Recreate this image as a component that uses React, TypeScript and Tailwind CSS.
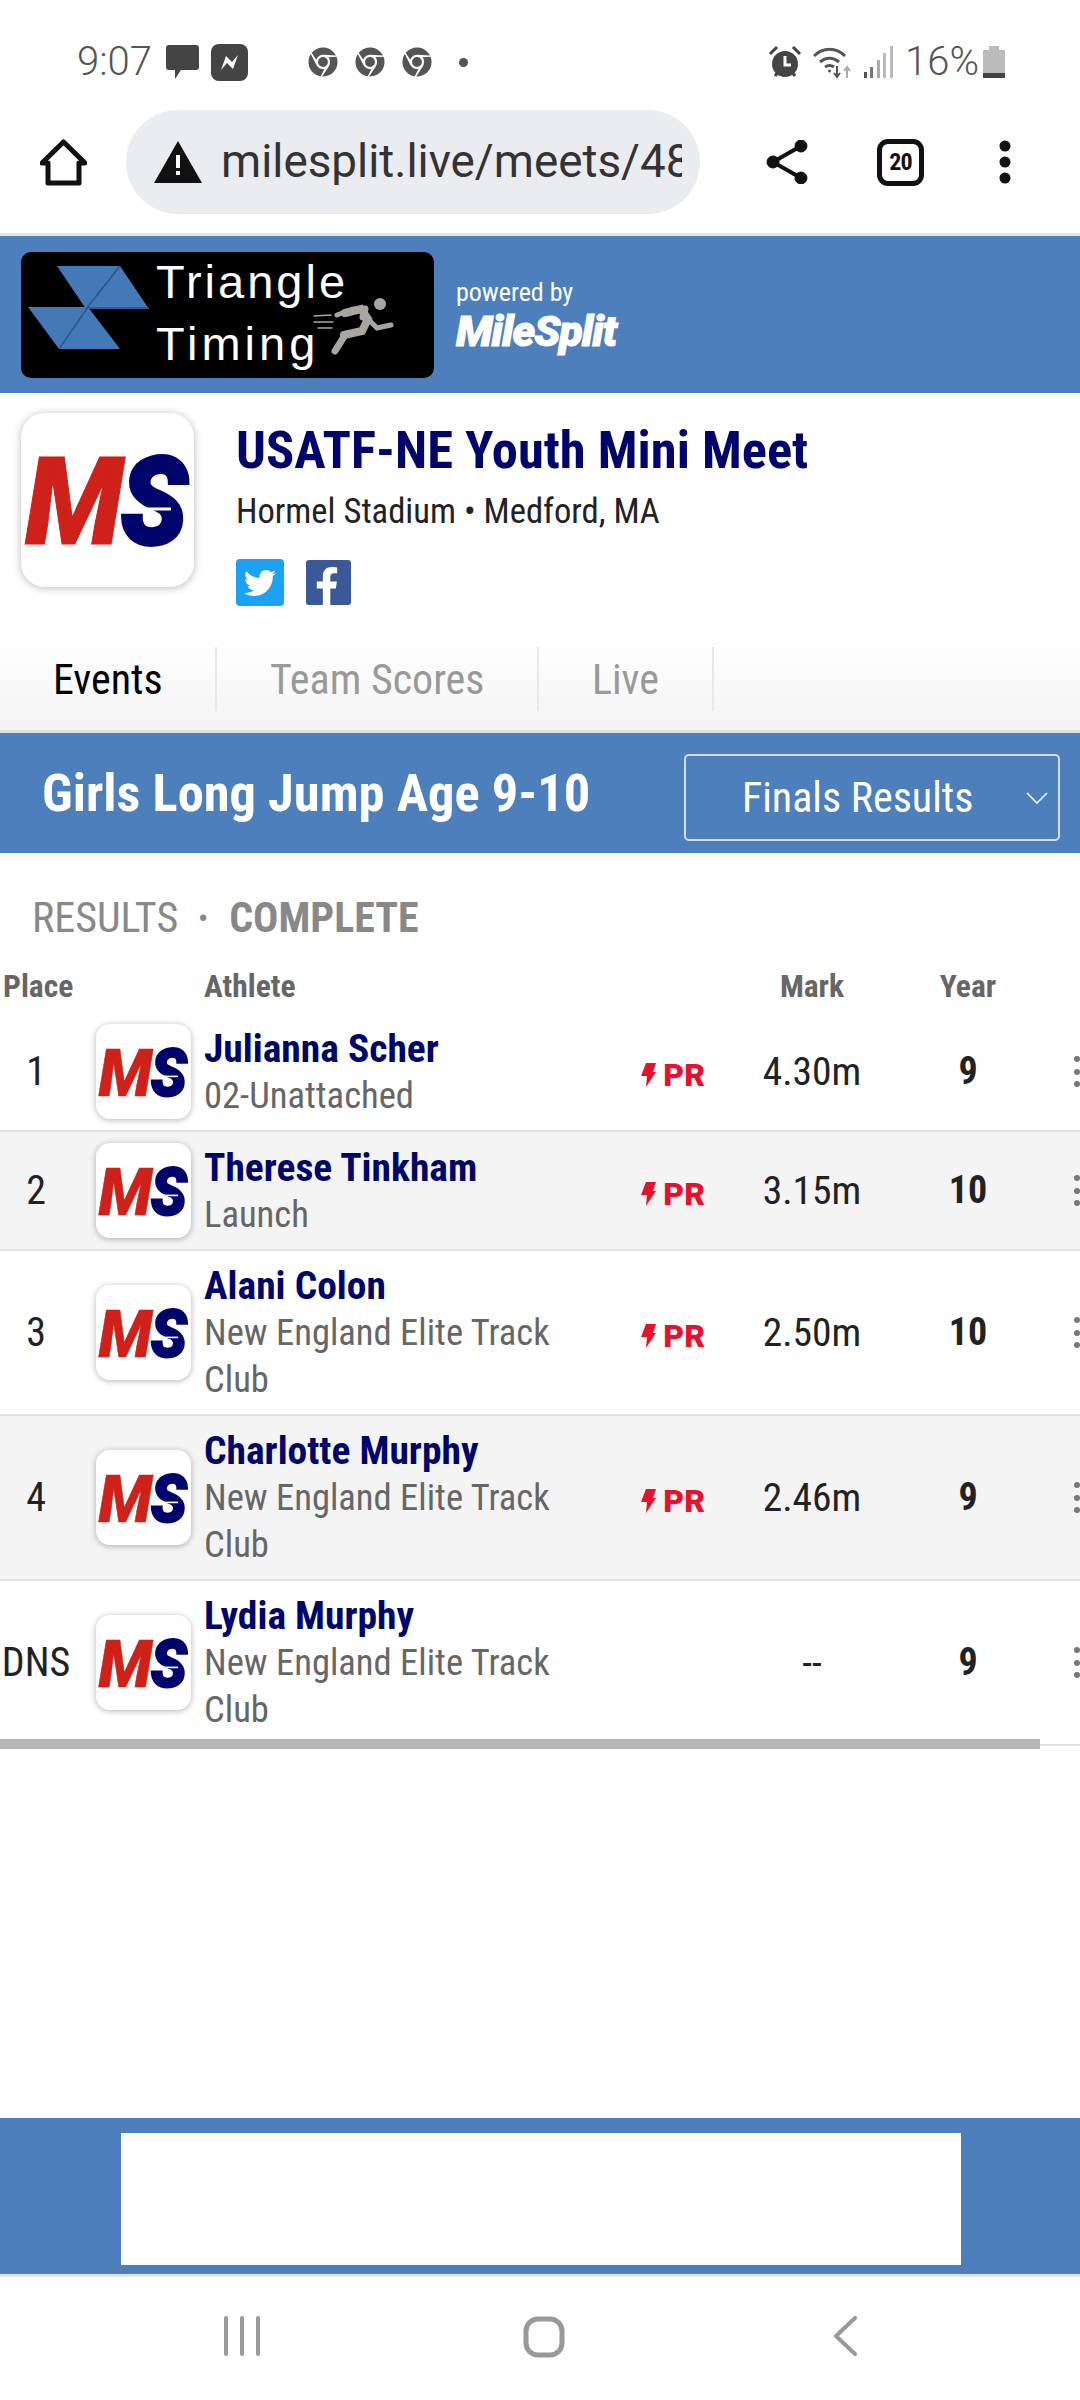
import { FaChrome, FaFacebookF, FaTwitter } from "react-icons/fa";

const rows = [
  { place: "1", name: "Julianna Scher", club: ["02-Unattached"], pr: true, mark: "4.30m", year: "9" },
  { place: "2", name: "Therese Tinkham", club: ["Launch"], pr: true, mark: "3.15m", year: "10", alt: true },
  { place: "3", name: "Alani Colon", club: ["New England Elite Track", "Club"], pr: true, mark: "2.50m", year: "10" },
  { place: "4", name: "Charlotte Murphy", club: ["New England Elite Track", "Club"], pr: true, mark: "2.46m", year: "9", alt: true },
  { place: "DNS", name: "Lydia Murphy", club: ["New England Elite Track", "Club"], pr: false, mark: "--", year: "9" },
];

function MsLogo() {
  return (
    <svg viewBox="0 0 173 174" className="h-full w-full">
      <g fontFamily="Roboto" fontWeight="900" fontStyle="italic" fontSize="122">
        <text x="4" y="131" textLength="98" lengthAdjust="spacingAndGlyphs" fill="#ce2119" stroke="#ce2119" strokeWidth="1">M</text>
        <text x="100" y="131" textLength="66" lengthAdjust="spacingAndGlyphs" fill="#00056b" stroke="#00056b" strokeWidth="4">S</text>
      </g>
      <path d="M116 96 L150 96" stroke="#fff" strokeWidth="3" />
    </svg>
  );
}

function StatusBar() {
  return (
    <div className="flex h-[100px] items-center pl-[77px] pt-[24px] text-[#555]">
      <span className="w-[89px] text-[40px] font-light">9:07</span>
      <svg viewBox="0 0 33 36" className="h-[36px] w-[33px]">
        <path d="M3 1h27a3 3 0 0 1 3 3v19a3 3 0 0 1-3 3H15l-6 9v-9H3a3 3 0 0 1-3-3V4a3 3 0 0 1 3-3z" fill="#444" />
      </svg>
      <svg viewBox="0 0 37 37" className="ml-[12px] h-[37px] w-[37px]">
        <rect width="37" height="37" rx="8" fill="#444" />
        <path d="M10 26l5-14 6 6 6-7-5 14-6-6z" fill="#fff" />
      </svg>
      <FaChrome className="ml-[60px] text-[30px] text-[#555]" />
      <FaChrome className="ml-[17px] text-[30px] text-[#555]" />
      <FaChrome className="ml-[17px] text-[30px] text-[#555]" />
      <span className="ml-[27px] h-[9px] w-[9px] rounded-full bg-[#555]" />
      <svg viewBox="0 0 34 34" className="ml-[300px] h-[34px] w-[34px]">
        <circle cx="17" cy="19" r="13" fill="#444" />
        <path d="M17 11v9h6" stroke="#fff" strokeWidth="3" fill="none" />
        <path d="M2 9l7-7M32 9l-7-7M7 31l3-4M27 31l-3-4" stroke="#444" strokeWidth="3" />
      </svg>
      <svg viewBox="0 0 38 34" className="ml-[11px] h-[34px] w-[38px]" fill="none" stroke="#555" strokeWidth="3">
        <path d="M1 11c9-9 22-9 31 0M7 17c6-5 13-5 19 0M12 22c3-2 6-2 9 0" />
        <circle cx="16.500" cy="26" r="1.500" fill="#555" stroke="none" />
        <path d="M24 21v10M21 28l3 4 3-4" strokeWidth="2" />
        <path d="M34 33V23M31 26l3-4 3 4" strokeWidth="2" stroke="#aaa" />
      </svg>
      <svg viewBox="0 0 29 32" className="ml-[13px] h-[32px] w-[29px]">
        <rect x="0" y="26" width="3" height="6" fill="#555" />
        <rect x="6" y="21" width="3" height="11" fill="#777" />
        <rect x="13" y="14" width="3" height="18" fill="#aaa" />
        <rect x="19" y="7" width="3" height="25" fill="#bbb" />
        <rect x="26" y="0" width="3" height="32" fill="#bbb" />
      </svg>
      <span className="ml-[12px] w-[78px] text-[40px] font-light">16%</span>
      <svg viewBox="0 0 22 32" className="h-[32px] w-[22px]">
        <rect x="6" y="0" width="10" height="4" fill="#bbb" />
        <rect x="0" y="4" width="22" height="28" rx="1" fill="#bbb" />
        <rect x="0" y="27" width="22" height="5" fill="#444" />
      </svg>
    </div>
  );
}

function Toolbar() {
  return (
    <div className="flex h-[136px] items-center border-b-[3px] border-[#e0e2e6] pb-[9px]">
      <svg viewBox="0 0 47 47" className="ml-[40px] h-[47px] w-[47px]" fill="none" stroke="#111" strokeWidth="5" strokeLinejoin="round">
        <path d="M2 24L23.500 3 45 24h-6v20H8V24z" />
      </svg>
      <div className="ml-[39px] flex h-[104px] w-[574px] items-center rounded-[52px] bg-[#ebecf0] pl-[28px]">
        <svg viewBox="0 0 48 42" className="h-[42px] w-[48px] shrink-0">
          <path d="M24 0L48 42H0z" fill="#111" />
          <rect x="22" y="14" width="4" height="13" fill="#fff" />
          <rect x="22" y="30" width="4" height="4" fill="#fff" />
        </svg>
        <div className="ml-[19px] w-[461px] overflow-hidden whitespace-nowrap text-[45.800px] leading-none text-[#333]">
          milesplit.live/meets/48
        </div>
      </div>
      <svg viewBox="0 0 42 44" className="ml-[66px] h-[44px] w-[42px]" fill="#111" stroke="#111">
        <circle cx="7" cy="22" r="6" />
        <circle cx="35" cy="6" r="6" />
        <circle cx="35" cy="38" r="6" />
        <path d="M7 22L35 6M7 22l28 16" strokeWidth="4" />
      </svg>
      <div className="ml-[69px] flex h-[47px] w-[47px] items-center justify-center rounded-[11px] border-[5px] border-[#111] text-[24px] font-bold leading-none tracking-[-1px] text-[#111] [font-stretch:75%]">
        20
      </div>
      <svg viewBox="0 0 12 44" className="ml-[75px] h-[44px] w-[12px]" fill="#111">
        <circle cx="6" cy="6" r="5.500" />
        <circle cx="6" cy="22" r="5.500" />
        <circle cx="6" cy="38" r="5.500" />
      </svg>
    </div>
  );
}

function Banner() {
  return (
    <div className="flex h-[157px] items-center bg-[#4d7fbd] pl-[21px]">
      <svg viewBox="0 0 413 126" className="h-[126px] w-[413px]">
        <rect width="413" height="126" rx="10" fill="#000" />
        <path d="M36 14h63l29 43H65zM7 55h60l32 42H38z" fill="#4479b8" />
        <path d="M65 57L99 14M38 97l29-42M65 56h63" stroke="#2c5488" strokeWidth="1.500" />
        <g fontFamily="Liberation Sans" fontSize="47" fill="#fff">
          <text x="135" y="46" letterSpacing="3">Triangle</text>
          <text x="135" y="108" letterSpacing="4">Timing</text>
        </g>
        <g transform="translate(28 -1)">
          <g stroke="#a9a69f" fill="none" strokeLinecap="round">
            <path d="M296 62l16-4 7 10-6 12-18 4" strokeWidth="8" />
            <path d="M319 68l9 9 14-3" strokeWidth="5" />
            <path d="M296 84l-10 16" strokeWidth="7" />
            <path d="M316 58l-2 8" strokeWidth="7" />
            <path d="M304 58l-16 6" strokeWidth="5" />
            <path d="M282 64l-17 1M284 71l-19 0M283 77h-14" strokeWidth="1.500" />
          </g>
          <circle cx="331" cy="53" r="6" fill="#a9a69f" />
        </g>
      </svg>
      <div className="ml-[22px] flex flex-col text-white">
        <span className="text-[26px] leading-[30px] [font-stretch:75%]">powered by</span>
        <span className="mt-[2px] text-[43px] font-black italic leading-[44px] tracking-[-1px] [-webkit-text-stroke:1px_white]">MileSplit</span>
      </div>
    </div>
  );
}

function MeetInfo() {
  return (
    <div className="flex h-[247px] items-start pl-[21px] pt-[20px]">
      <div className="h-[174px] w-[173px] rounded-[24px] bg-white shadow-[0_1px_8px_rgba(0,0,0,0.28)]">
        <MsLogo />
      </div>
      <div className="ml-[42px] flex flex-col">
        <h1 className="mt-[7px] whitespace-nowrap text-[52.500px] font-bold leading-[60px] text-[#00056b] [font-stretch:75%]">
          USATF-NE Youth Mini Meet
        </h1>
        <p className="mt-[10px] whitespace-nowrap text-[34.600px] leading-[42px] text-[#222] [font-stretch:75%]">
          Hormel Stadium • Medford, MA
        </p>
        <div className="mt-[27px] flex items-center">
          <div className="flex h-[47px] w-[48px] items-center justify-center rounded-[4px] bg-[#1da1f2]">
            <FaTwitter className="text-[32px] text-white" />
          </div>
          <div className="ml-[22px] flex h-[45px] w-[45px] items-end justify-end rounded-[3px] bg-[#3b5998] pr-[5px]">
            <FaFacebookF className="text-[38px] text-white" />
          </div>
        </div>
      </div>
    </div>
  );
}

function Tabs() {
  return (
    <div className="flex h-[93px] items-start border-b-[3px] border-[#e0e0e0] bg-gradient-to-b from-white to-[#f3f3f3] pt-[7px] text-[42px] [font-stretch:75%]">
      <div className="flex h-[64px] w-[217px] items-center border-r-2 border-[#e8e8e8] pl-[53px] text-black">Events</div>
      <div className="flex h-[64px] w-[322px] items-center border-r-2 border-[#e8e8e8] pl-[53px] text-[#999]">Team Scores</div>
      <div className="flex h-[64px] w-[175px] items-center border-r-2 border-[#e8e8e8] pl-[53px] text-[#999]">Live</div>
    </div>
  );
}

function EventBar() {
  return (
    <div className="flex h-[120px] items-center bg-[#4d7fbd] pl-[42px] text-white">
      <h2 className="w-[642px] text-[52.500px] font-bold leading-none [font-stretch:75%]">Girls Long Jump Age 9-10</h2>
      <div className="mt-[9px] flex h-[87px] w-[376px] items-center rounded-[5px] border-2 border-[#d5e0ee] pl-[56px]">
        <span className="w-[234px] text-[42px] leading-none [font-stretch:75%]">Finals Results</span>
        <svg viewBox="0 0 22 12" className="ml-[50px] h-[12px] w-[22px]" fill="none" stroke="#fff" strokeWidth="1.500">
          <path d="M1 1l10 10L21 1" />
        </svg>
      </div>
    </div>
  );
}

function ResultRow({ row }: { row: (typeof rows)[number] }) {
  return (
    <div className={`flex items-center border-b-2 border-[#e2e2e2] py-[11px] ${row.alt ? "bg-[#f4f4f4]" : "bg-white"}`}>
      <div className="w-[72px] text-center text-[40px] text-[#222] [font-stretch:75%]">{row.place}</div>
      <div className="ml-[24px] h-[95px] w-[95px] shrink-0 rounded-[14px] bg-white shadow-[0_1px_6px_rgba(0,0,0,0.3)]">
        <MsLogo />
      </div>
      <div className="ml-[13px] w-[425px] leading-[47px]">
        <div className="text-[39.500px] font-bold text-[#00056b] [font-stretch:75%]">{row.name}</div>
        {row.club.map((line) => (
          <div key={line} className="text-[36.600px] text-[#666] [font-stretch:75%]">{line}</div>
        ))}
      </div>
      <div className="flex w-[76px] items-center justify-end pt-[6px]">
        {row.pr && (
          <>
            <svg viewBox="0 0 15 24" className="h-[24px] w-[15px]" fill="#e8112d">
              <path d="M5 0h10l-3 9h3L5 24l1-11H0z" />
            </svg>
            <span className="ml-[7px] text-[32px] font-black leading-none text-[#e8112d]">PR</span>
          </>
        )}
      </div>
      <div className="w-[214px] text-center text-[39.500px] text-[#222] [font-stretch:75%]">{row.mark}</div>
      <div className="w-[98px] text-center text-[38px] font-bold text-[#222] [font-stretch:75%]">{row.year}</div>
      <div className="ml-[57px] flex w-[6px] flex-col gap-[6.500px]">
        <span className="h-[6px] w-[6px] rounded-full bg-[#777]" />
        <span className="h-[6px] w-[6px] rounded-full bg-[#777]" />
        <span className="h-[6px] w-[6px] rounded-full bg-[#777]" />
      </div>
    </div>
  );
}

function Results() {
  return (
    <div className="relative">
      <div className="flex h-[86px] items-end pl-[32px] text-[42px] leading-none text-[#888] [font-stretch:75%]">
        <span>RESULTS</span>
        <span className="ml-[19px] font-bold">·</span>
        <span className="ml-[20px] font-bold">COMPLETE</span>
      </div>
      <div className="flex h-[74px] items-start pt-[30px] text-[31.500px] font-bold leading-[36px] text-[#666] [font-stretch:75%]">
        <span className="ml-[3px] w-[201px]">Place</span>
        <span className="w-[501px]">Athlete</span>
        <span className="w-[214px] text-center">Mark</span>
        <span className="w-[98px] text-center">Year</span>
      </div>
      {rows.map((row) => (
        <ResultRow key={row.name} row={row} />
      ))}
      <div className="absolute bottom-[-3px] left-0 h-[10px] w-[1040px] bg-[#b5b5b5]" />
    </div>
  );
}

export default function App() {
  return (
    <div className="flex h-[2400px] w-[1080px] flex-col overflow-hidden bg-white font-[Roboto,sans-serif]">
      <StatusBar />
      <Toolbar />
      <Banner />
      <MeetInfo />
      <Tabs />
      <EventBar />
      <Results />
      <div className="flex-1" />
      <div className="flex h-[156px] items-start justify-center bg-[#4d7fbd] pl-[2px] pt-[15px]">
        <div className="h-[132px] w-[840px] bg-white" />
      </div>
      <div className="flex h-[126px] items-start border-t-[3px] border-[#e0e2e6] pt-[39px]">
        <svg viewBox="0 0 36 40" className="ml-[224px] h-[40px] w-[36px]" stroke="#999" strokeWidth="4" strokeLinecap="round">
          <path d="M2 2v36M18 2v36M34 2v36" />
        </svg>
        <svg viewBox="0 0 42 42" className="ml-[263px] h-[42px] w-[42px]" fill="none" stroke="#999" strokeWidth="5">
          <rect x="3" y="3" width="36" height="36" rx="12" />
        </svg>
        <svg viewBox="0 0 24 40" className="ml-[268px] h-[40px] w-[24px]" fill="none" stroke="#999" strokeWidth="4" strokeLinecap="round" strokeLinejoin="round">
          <path d="M22 2L3 20l19 18" />
        </svg>
      </div>
    </div>
  );
}
